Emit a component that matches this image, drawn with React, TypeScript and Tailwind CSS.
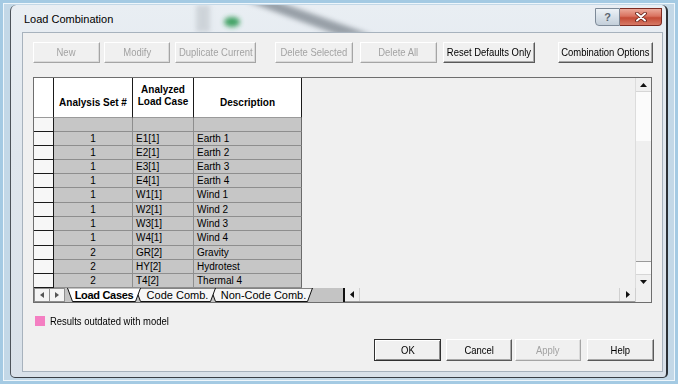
import React from 'react';

const ui = "font-['Liberation_Sans',Arial,sans-serif]";
const tbl = "font-['Liberation_Sans',Arial,sans-serif]";

interface BtnDef {
  label: string;
  cls: string;
  disabled?: boolean;
  isDefault?: boolean;
}

const topButtons: BtnDef[] = [
  { label: 'New', cls: 'w-[67px]', disabled: true },
  { label: 'Modify', cls: 'w-[66px] ml-[4px]', disabled: true },
  { label: 'Duplicate Current', cls: 'w-[81px] ml-[5px]', disabled: true },
  { label: 'Delete Selected', cls: 'w-[78px] ml-[19px]', disabled: true },
  { label: 'Delete All', cls: 'w-[77px] ml-[7px]', disabled: true },
  { label: 'Reset Defaults Only', cls: 'w-[92px] ml-[6px]' },
  { label: 'Combination Options', cls: 'w-[95px] ml-[23px]' },
];

const bottomButtons: BtnDef[] = [
  { label: 'OK', cls: 'w-[67px]', isDefault: true },
  { label: 'Cancel', cls: 'w-[66px] ml-[5px]' },
  { label: 'Apply', cls: 'w-[66px] ml-[3px]', disabled: true },
  { label: 'Help', cls: 'w-[67px] ml-[6px]' },
];

// set #, load case, description, row height
const rows: [string, string, string, string][] = [
  ['', '', '', 'h-[14px]'],
  ['1', 'E1[1]', 'Earth 1', 'h-[14px]'],
  ['1', 'E2[1]', 'Earth 2', 'h-[14px]'],
  ['1', 'E3[1]', 'Earth 3', 'h-[14px]'],
  ['1', 'E4[1]', 'Earth 4', 'h-[14px]'],
  ['1', 'W1[1]', 'Wind 1', 'h-[15px]'],
  ['1', 'W2[1]', 'Wind 2', 'h-[14px]'],
  ['1', 'W3[1]', 'Wind 3', 'h-[14px]'],
  ['1', 'W4[1]', 'Wind 4', 'h-[15px]'],
  ['2', 'GR[2]', 'Gravity', 'h-[14px]'],
  ['2', 'HY[2]', 'Hydrotest', 'h-[14px]'],
  ['2', 'T4[2]', 'Thermal 4', 'h-[14px]'],
];

const Button = ({ label, cls, disabled, isDefault }: BtnDef) => (
  <div
    className={`flex items-center justify-center bg-[#f0f0f0] ${ui} text-[11px] leading-none border ${cls} ${
      isDefault
        ? 'border-[#303030] shadow-[inset_1px_1px_0_#ffffff,inset_-1px_-1px_0_#8c8c8c] text-black'
        : disabled
        ? 'border-t-white border-l-white border-r-[#a5a5a5] border-b-[#a5a5a5] shadow-[inset_-1px_-1px_0_#dadada] text-[#a3a3a3]'
        : 'border-t-white border-l-white border-r-[#5a5a5a] border-b-[#5a5a5a] shadow-[inset_-1px_-1px_0_#a8a8a8] text-black'
    }`}
  >
    <span className="inline-block whitespace-nowrap scale-x-[0.86]">{label}</span>
  </div>
);

const Tri = ({ dir }: { dir: 'up' | 'down' | 'left' | 'right' }) => {
  const pts = {
    up: '0,4 7,4 3.5,0',
    down: '0,0 7,0 3.5,4',
    left: '4,0 4,7 0,3.5',
    right: '0,0 0,7 4,3.5',
  }[dir];
  const vertical = dir === 'up' || dir === 'down';
  return (
    <svg width={vertical ? 7 : 4} height={vertical ? 4 : 7} viewBox={vertical ? '0 0 7 4' : '0 0 4 7'}>
      <polygon points={pts} fill="#111" />
    </svg>
  );
};

export default function App() {
  return (
    <div className="w-[678px] h-[384px] bg-[#a4cae3] p-[3px]">
      <div className="h-full border border-[#eef6fb] bg-[#c3d8e7] px-[6px] pt-[1px] pb-[2px]">
        {/* window */}
        <div className="h-full flex flex-col rounded-t-[6px] rounded-b-[5px] border-l border-l-[#4d535a] border-r-2 border-r-[#2c3136] border-b border-b-[#3a3f45] bg-[linear-gradient(180deg,#e9eef3_0%,#dfe6ed_40%,#d9e1e9_100%)] pl-[11px] pr-[3px] pb-[5px]">
          {/* title bar */}
          <div className="relative h-[27px] flex items-start">
            <svg className="absolute left-[150px] top-0" width="220" height="27" viewBox="0 0 220 27">
              <defs>
                <filter id="bl" x="-50%" y="-50%" width="200%" height="200%">
                  <feGaussianBlur stdDeviation="2.5" />
                </filter>
              </defs>
              <rect x="24" y="0" width="14" height="27" fill="#c3c9cf" opacity="0.7" filter="url(#bl)" />
              <polygon points="74,-4 104,-4 200,30 166,30" fill="#56616b" opacity="0.55" filter="url(#bl)" />
              <ellipse cx="60" cy="17" rx="8" ry="5" fill="#2f9a55" opacity="0.9" filter="url(#bl)" />
            </svg>
            <span className="relative mt-[8px] ml-[2px] font-['Liberation_Sans',Arial,sans-serif] text-[11px] leading-[13px] text-black">
              Load Combination
            </span>
            <div className="relative ml-auto mr-[1px] mt-[3px] flex">
              <div className="w-[25px] h-[18px] flex items-center justify-center rounded-bl-[4px] border border-[#7d8a98] bg-[linear-gradient(180deg,#edf2f6_0%,#d7e0e8_50%,#c3cfda_100%)] text-[11px] font-bold leading-none text-[#5b6570] font-['Liberation_Sans',Arial,sans-serif]">
                ?
              </div>
              <div className="w-[42px] h-[18px] flex items-center justify-center rounded-br-[4px] border border-l-0 border-[#7e2a20] bg-[linear-gradient(180deg,#eba99a_0%,#d9725f_45%,#c44b36_55%,#d77a66_100%)]">
                <svg width="12" height="10" viewBox="0 0 12 10">
                  <path d="M2 1.5 L10 8.5 M10 1.5 L2 8.5" stroke="#5d1a12" strokeWidth="3.6" strokeLinecap="round" />
                  <path d="M2 1.5 L10 8.5 M10 1.5 L2 8.5" stroke="#ffffff" strokeWidth="2" strokeLinecap="round" />
                </svg>
              </div>
            </div>
          </div>

          {/* content */}
          <div className="flex-1 flex flex-col border border-[#a7b2bd] bg-[#f0f0f0]">
            <div className="flex h-[21px] mt-[9px] ml-[10px]">
              {topButtons.map((b) => (
                <Button key={b.label} {...b} />
              ))}
            </div>

            {/* grid */}
            <div className="ml-[10px] mt-[14px] w-[619px] h-[226px] border border-[#6e6e6e] flex flex-col">
              <div className="flex h-[210px]">
                <div className={`flex-1 overflow-hidden bg-[#f0f0f0] ${tbl} text-[10px] leading-none text-black`}>
                  <div className="flex h-[40px]">
                    <div className="w-[20px] bg-white border-r border-r-[#1a1a1a] border-b border-b-[#9a9a9a]" />
                    <div className="w-[79px] bg-white border-r border-r-[#1a1a1a] border-b border-b-[#9a9a9a] flex items-end justify-center pb-[9px] font-bold">
                      Analysis Set #
                    </div>
                    <div className="w-[61px] bg-white border-r border-r-[#1a1a1a] border-b border-b-[#9a9a9a] flex flex-col items-center justify-end pb-[9px] font-bold leading-[12px]">
                      <span>Analyzed</span>
                      <span>Load Case</span>
                    </div>
                    <div className="w-[108px] bg-white border-r border-r-[#1a1a1a] border-b border-b-[#9a9a9a] flex items-end justify-center pb-[9px] font-bold">
                      Description
                    </div>
                  </div>
                  {rows.map(([set, lc, desc, h], i) => (
                    <div key={i} className={`flex ${h}`}>
                      <div className="w-[20px] bg-[#f7f7f7] border-r border-r-[#1a1a1a] border-b border-b-[#1a1a1a]" />
                      <div className="w-[79px] bg-[#c6c6c6] border-r border-r-[#8e8e8e] border-b border-b-[#8e8e8e] flex items-center justify-center">
                        {set}
                      </div>
                      <div className="w-[61px] bg-[#c6c6c6] border-r border-r-[#8e8e8e] border-b border-b-[#8e8e8e] flex items-center pl-[3px]">
                        {lc}
                      </div>
                      <div className="w-[108px] bg-[#c6c6c6] border-r border-r-[#6a6a6a] border-b border-b-[#8e8e8e] flex items-center pl-[3px]">
                        {desc}
                      </div>
                    </div>
                  ))}
                </div>
                {/* vertical scrollbar */}
                <div className="w-[16px] flex flex-col border-l border-l-[#dcdcdc] bg-[#eeeeee]">
                  <div className="h-[14px] flex items-center justify-center bg-[#f0f0f0] border-b border-b-[#d6d6d6]">
                    <Tri dir="up" />
                  </div>
                  <div className="h-[49px] bg-[#fbfbfb]" />
                  <div className="flex-1 bg-[#efefef]" />
                  <div className="h-[13px] bg-[#f9f9f9] border-t border-t-[#9a9a9a]" />
                  <div className="h-[14px] flex items-center justify-center bg-[#f0f0f0] border-t border-t-[#d6d6d6]">
                    <Tri dir="down" />
                  </div>
                </div>
              </div>

              {/* tab strip + horizontal scrollbar */}
              <div className="flex h-[14px]">
                <div className="relative w-[311px] h-[14px]">
                  <svg className="absolute inset-0" width="311" height="14" viewBox="0 0 311 14">
                    <rect x="0" y="0" width="311" height="14" fill="#c4c4c4" />
                    <rect x="0.5" y="0.5" width="15" height="13" fill="#f4f4f4" stroke="#8f8f8f" />
                    <rect x="15.5" y="0.5" width="15" height="13" fill="#f4f4f4" stroke="#8f8f8f" />
                    <polygon points="6,7 10,4 10,10" fill="#555" />
                    <polygon points="21,4 21,10 25,7" fill="#555" />
                    <polygon points="176.5,0 278.5,0 273.5,13.5 181.5,13.5" fill="#f6f6f6" stroke="#111" />
                    <polygon points="101.5,0 181.5,0 176.5,13.5 106.5,13.5" fill="#f6f6f6" stroke="#111" />
                    <polygon points="33.5,0 106.5,0 101.5,13.5 38.5,13.5" fill="#ffffff" stroke="#111" />
                    <line x1="34" y1="0" x2="106" y2="0" stroke="#ffffff" />
                    <rect x="309" y="0" width="2" height="14" fill="#111" />
                  </svg>
                  <div className={`relative flex h-[14px] items-center pl-[34px] ${tbl} text-[11px] leading-none text-black`}>
                    <span className="w-[72px] text-center font-bold tracking-[-0.3px]">Load Cases</span>
                    <span className="w-[75px] text-center">Code Comb.</span>
                    <span className="w-[97px] text-center">Non-Code Comb.</span>
                  </div>
                </div>
                <div className="w-[291px] flex bg-[#f0f0f0] border-b border-b-[#9c9c9c]">
                  <div className="w-[15px] flex items-center justify-center border-r border-r-[#d0d0d0]">
                    <Tri dir="left" />
                  </div>
                  <div className="flex-1" />
                  <div className="w-[16px] flex items-center justify-center border-l border-l-[#d0d0d0]">
                    <Tri dir="right" />
                  </div>
                </div>
                <div className="w-[16px] bg-[#f0f0f0] border-l border-l-[#cfcfcf]" />
              </div>
            </div>

            {/* legend */}
            <div className="flex items-center ml-[12px] mt-[13px] h-[10px]">
              <div className="w-[10px] h-[10px] bg-[#f47fc2]" />
              <span className={`ml-[5px] inline-block whitespace-nowrap origin-left scale-x-[0.86] ${ui} text-[11px] leading-none text-black`}>
                Results outdated with model
              </span>
            </div>

            {/* dialog buttons */}
            <div className="flex justify-end h-[22px] mt-[13px] pr-[8px]">
              {bottomButtons.map((b) => (
                <Button key={b.label} {...b} />
              ))}
            </div>
          </div>
        </div>
      </div>
    </div>
  );
}
